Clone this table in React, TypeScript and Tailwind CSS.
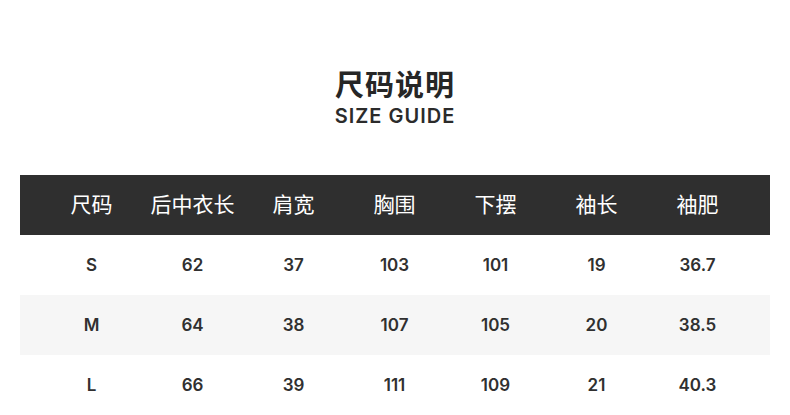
const HEADERS = ["尺码", "后中衣长", "肩宽", "胸围", "下摆", "袖长", "袖肥"];

const ROWS = [
  ["S", "62", "37", "103", "101", "19", "36.7"],
  ["M", "64", "38", "107", "105", "20", "38.5"],
  ["L", "66", "39", "111", "109", "21", "40.3"],
];

export default function App() {
  return (
    <div className="w-[790px] h-[415px] overflow-hidden bg-white font-['Inter','Noto_Sans_CJK_SC',sans-serif]">
      <div className="flex h-[175px] flex-col items-center pt-[67px]">
        <h1 className="text-[29px] leading-[38px] font-bold text-[#262626] tracking-[1px]">
          尺码说明
        </h1>
        <div className="mt-[-2px] text-[20px] leading-[26px] font-semibold text-[#2b2b2b] tracking-[1px]">
          SIZE GUIDE
        </div>
      </div>
      <div className="mx-[20px]">
        <div className="flex h-[60px] items-center bg-[#2f2f2f] pl-[21px] pr-[22px]">
          {HEADERS.map((h) => (
            <div key={h} className="flex-1 text-center text-[21px] text-white">
              {h}
            </div>
          ))}
        </div>
        {ROWS.map((row, i) => (
          <div
            key={row[0]}
            className={`flex h-[60px] items-center pl-[21px] pr-[22px] pt-[2px] ${i === 1 ? "bg-[#f6f6f6]" : "bg-white"}`}
          >
            {row.map((c, j) => (
              <div key={j} className="flex-1 text-center text-[17px] font-semibold text-[#303030]">
                {c}
              </div>
            ))}
          </div>
        ))}
      </div>
    </div>
  );
}
